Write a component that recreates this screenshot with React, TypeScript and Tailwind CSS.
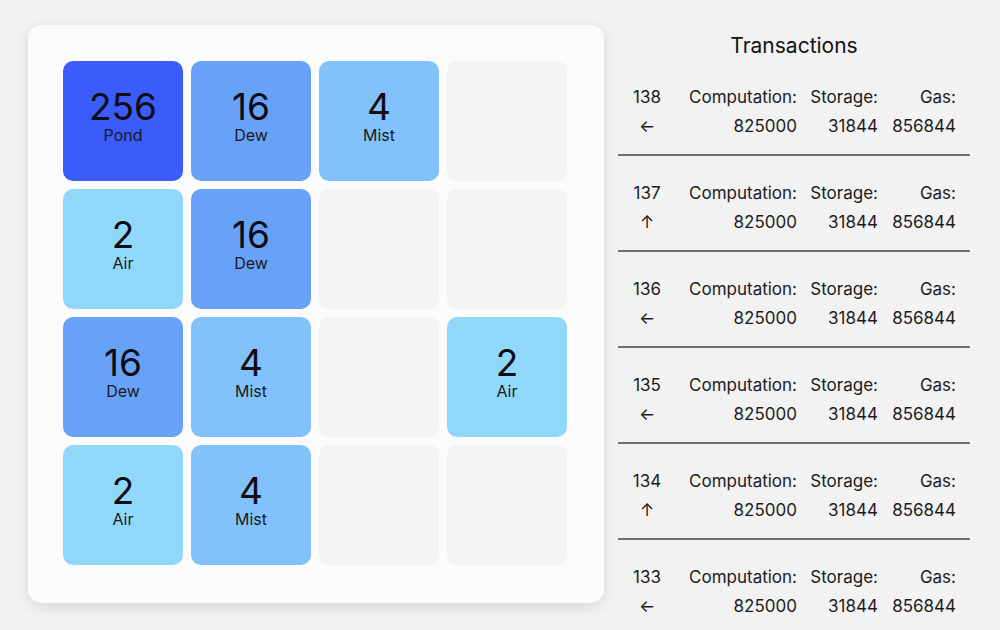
const tiles: [number, string][] = [
  [256, 'Pond'], [16, 'Dew'], [4, 'Mist'], [0, ''],
  [2, 'Air'], [16, 'Dew'], [0, ''], [0, ''],
  [16, 'Dew'], [4, 'Mist'], [0, ''], [2, 'Air'],
  [2, 'Air'], [4, 'Mist'], [0, ''], [0, ''],
]

const tileColor: Record<number, string> = {
  0: 'bg-[#f3f3f3]',
  2: 'bg-[#8fd8fa]',
  4: 'bg-[#80c2f9]',
  16: 'bg-[#68a2f8]',
  256: 'bg-[#3c5bfb]',
}

const txs = [
  { id: 138, dir: '←' },
  { id: 137, dir: '↑' },
  { id: 136, dir: '←' },
  { id: 135, dir: '←' },
  { id: 134, dir: '↑' },
  { id: 133, dir: '←' },
]

function Tile({ value, label }: { value: number, label: string }) {
  return (
    <div className={`w-[120px] h-[120px] rounded-[10px] flex flex-col items-center justify-center pb-[9px] ${tileColor[value]}`}>
      {value > 0 && (
        <>
          <span className="text-[37px] leading-[36px] text-[#0d0d12]">{value}</span>
          <span className="text-[16px] leading-[20px] text-[#1a1a24]">{label}</span>
        </>
      )}
    </div>
  )
}

export default function App() {
  return (
    <div className="w-[1000px] h-[630px] bg-[#f2f2f2] overflow-hidden flex items-start font-['Inter',sans-serif]">
      <div className="ml-[28px] mt-[25px] w-[576px] h-[578px] bg-[#fbfbfb] rounded-[14px] shadow-[0_4px_14px_rgba(0,0,0,0.11)] pt-[36px] pl-[35px]">
        <div className="grid grid-cols-[repeat(4,120px)] gap-[8px]">
          {tiles.map(([v, l], i) => <Tile key={i} value={v} label={l} />)}
        </div>
      </div>

      <div className="ml-[14px] w-[352px] flex flex-col text-[#1c1c1c]">
        <h2 className="mt-[32px] text-center text-[21px] leading-[28px] text-[#111]">Transactions</h2>
        {txs.map((t, i) => (
          <div key={t.id} className="flex flex-col">
            <div className="pt-[23px] pb-[13px] grid grid-cols-[58px_121px_81px_78px] text-[17px] leading-[29px]">
              <span className="text-center">{t.id}</span>
              <span className="text-right">Computation:</span>
              <span className="text-right">Storage:</span>
              <span className="text-right">Gas:</span>
              <span className="text-center">{t.dir}</span>
              <span className="text-right">825000</span>
              <span className="text-right">31844</span>
              <span className="text-right">856844</span>
            </div>
            {i < txs.length - 1 && <div className="h-[2px] bg-[#6f6f6f]" />}
          </div>
        ))}
      </div>
    </div>
  )
}
